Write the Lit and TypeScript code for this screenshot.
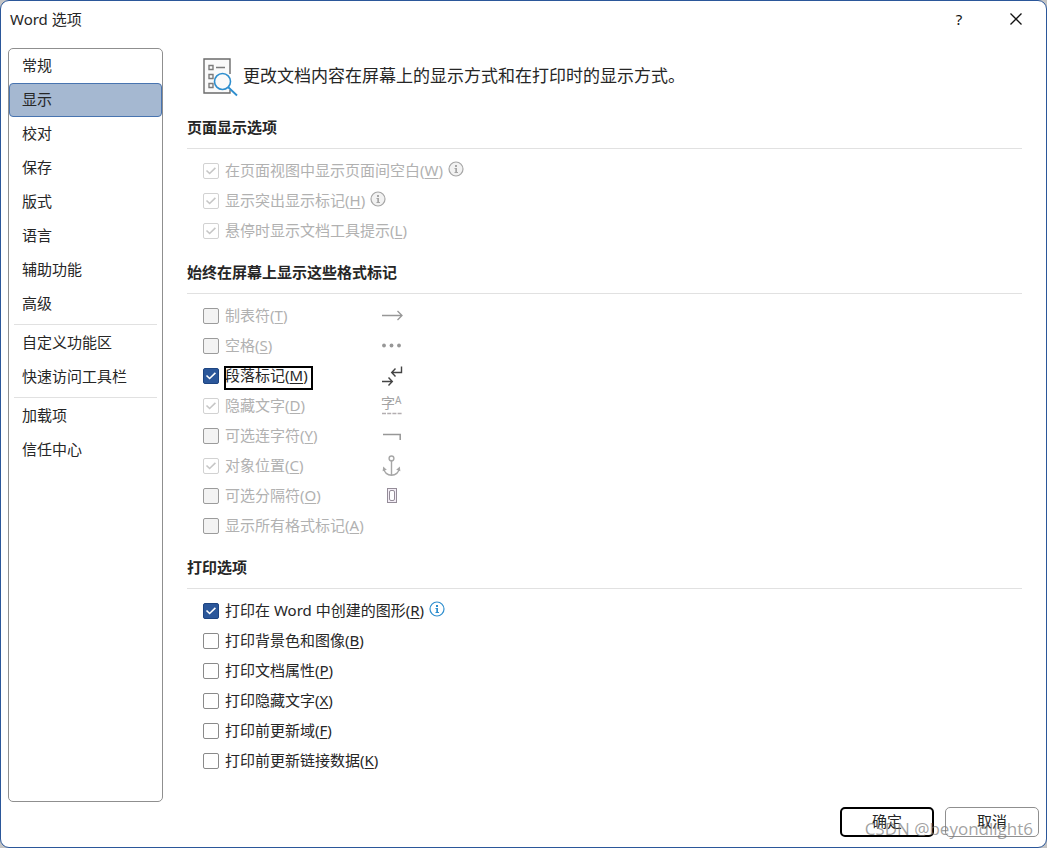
import { LitElement, html, svg, css, nothing } from "lit";
import { customElement, property, state } from "lit/decorators.js";

type Option = {
  id: string;
  text: string;
  key: string;
  checked?: boolean;
  disabled?: boolean;
  focused?: boolean;
  info?: boolean;
  mark?: string;
};

const pageOptions: Option[] = [
  { id: "whitespace", text: "在页面视图中显示页面间空白", key: "W", checked: true, disabled: true, info: true },
  { id: "highlight", text: "显示突出显示标记", key: "H", checked: true, disabled: true, info: true },
  { id: "tooltips", text: "悬停时显示文档工具提示", key: "L", checked: true, disabled: true },
];

const markOptions: Option[] = [
  { id: "tabs", text: "制表符", key: "T", disabled: true, mark: "tab" },
  { id: "spaces", text: "空格", key: "S", disabled: true, mark: "space" },
  { id: "paragraph", text: "段落标记", key: "M", checked: true, focused: true, mark: "paragraph" },
  { id: "hidden", text: "隐藏文字", key: "D", checked: true, disabled: true, mark: "hidden" },
  { id: "hyphens", text: "可选连字符", key: "Y", disabled: true, mark: "hyphen" },
  { id: "anchors", text: "对象位置", key: "C", checked: true, disabled: true, mark: "anchor" },
  { id: "breaks", text: "可选分隔符", key: "O", disabled: true, mark: "break" },
  { id: "all", text: "显示所有格式标记", key: "A", disabled: true },
];

const printOptions: Option[] = [
  { id: "drawings", text: "打印在 Word 中创建的图形", key: "R", checked: true, info: true },
  { id: "background", text: "打印背景色和图像", key: "B" },
  { id: "properties", text: "打印文档属性", key: "P" },
  { id: "print-hidden", text: "打印隐藏文字", key: "X" },
  { id: "fields", text: "打印前更新域", key: "F" },
  { id: "links", text: "打印前更新链接数据", key: "K" },
];

const navGroups = [
  ["常规", "显示", "校对", "保存", "版式", "语言", "辅助功能", "高级"],
  ["自定义功能区", "快速访问工具栏"],
  ["加载项", "信任中心"],
];

const marks: Record<string, unknown> = {
  tab: svg`<path d="M0 11.5H20M15.5 7L20 11.5L15.5 16" stroke="#979797" stroke-width="1.3"/>`,
  space: svg`<g fill="#979797"><circle cx="2" cy="11.5" r="1.9"/><circle cx="9.5" cy="11.5" r="1.9"/><circle cx="17" cy="11.5" r="1.9"/></g>`,
  paragraph: svg`<path d="M19.5 2.5V8.5H10M13.5 4.5L9.7 8.5L13.5 12.5M0 17.5H10M6.5 13.5L10.3 17.5L6.5 21.5" stroke="#444" stroke-width="1.4"/>`,
  hidden: svg`<text x="-1" y="14" font-size="14" fill="#a3a3a3">字</text><text x="13" y="10" font-size="10" fill="#a3a3a3">A</text><path d="M0 19.5H20" stroke="#b3aeb1" stroke-width="1.4" stroke-dasharray="4 1.2"/>`,
  hyphen: svg`<path d="M1 10.5H18.2V16" stroke="#979797" stroke-width="1.5"/>`,
  anchor: svg`<g stroke="#a6a6a6" stroke-width="1.4"><circle cx="9.5" cy="4.4" r="2.4"/><path d="M9.5 6.8V21.4M1.8 14.5C2 18.5 5.5 21.3 9.5 21.3C13.5 21.3 17 18.5 17.2 14.5"/></g><path d="M1.2 12.5L4.8 15.8L.6 17.2zM17.8 12.5L14.2 15.8L18.4 17.2z" fill="#a6a6a6"/>`,
  break: svg`<g stroke="#948c98"><rect x="5.5" y="4.5" width="9" height="14" fill="#f3edf6"/><rect x="7.5" y="6.5" width="5" height="10" rx="1.5" fill="#fff"/></g>`,
};

@customElement("option-row")
class OptionRow extends LitElement {
  @property({ attribute: false }) option!: Option;

  static styles = css`
    :host {
      display: grid;
      grid-template-columns: minmax(179px, max-content) auto;
      align-items: center;
      justify-content: start;
      height: 30px;
      color: #262626;
    }
    .main, .field {
      display: flex;
      align-items: center;
      gap: 6px;
    }
    .main { gap: 5px; }
    .box {
      display: grid;
      flex: none;
    }
    .box > * { grid-area: 1 / 1; }
    input {
      appearance: none;
      width: 16px;
      height: 16px;
      margin: 0;
      border: 1px solid #8a8a8a;
      border-radius: 2px;
      background: #fff;
    }
    input:checked { background: #2b579a; border-color: #1d4481; }
    input:disabled { background: #f3f3f3; border-color: #9b9b9b; }
    input:checked:disabled { background: #fff; border-color: #d2d2d2; }
    .tick { fill: none; stroke: #fff; stroke-width: 1.6; pointer-events: none; }
    .off .tick { stroke: #c6c6c6; }
    .off { color: #b1b1b1; }
    label {
      line-height: 18px;
      padding-bottom: 2px;
      white-space: nowrap;
    }
    .focused {
      outline: 2px solid #000;
      outline-offset: -2px;
      padding: 0 5px 6px 1px;
      margin: 0 0 -4px -1px;
    }
    u { text-underline-offset: 2px; text-decoration-thickness: 1px; }
    .info { margin-bottom: 4px; flex: none; }
    .mark { fill: none; overflow: visible; margin-bottom: 2px; }
  `;

  render() {
    const o = this.option;
    const tone = o.disabled ? "#a6a6a6" : "#2e8ece";
    return html`
      <div class="main ${o.disabled ? "off" : ""}">
        <div class="field">
          <span class="box">
            <input type="checkbox" id=${o.id} ?checked=${o.checked} ?disabled=${o.disabled} />
            ${o.checked
              ? html`<svg class="tick" width="16" height="16"><path d="M3.5 7.5L6.6 10.5L12.4 4.9" /></svg>`
              : nothing}
          </span>
          <label for=${o.id} class=${o.focused ? "focused" : ""}>${o.text}(<u>${o.key}</u>)</label>
        </div>
        ${o.info
          ? html`<svg class="info" width="16" height="16">
              <circle cx="8" cy="8" r="7" fill=${o.disabled ? "#f2f2f2" : "#fff"} stroke=${tone} stroke-width="1.2" />
              <path d="M7 4h2v2H7zM6.5 7H9v4h1v1H6.5v-1H7.3V8H6.5z" fill=${tone} />
            </svg>`
          : nothing}
      </div>
      ${o.mark ? html`<svg class="mark" width="21" height="23">${marks[o.mark]}</svg>` : nothing}
    `;
  }
}

@customElement("app-root")
class AppRoot extends LitElement {
  @state() selected = "显示";

  static styles = css`
    :host {
      display: block;
      background: #c4c4c4;
      font: 15px/20px "Noto Sans", "Noto Sans CJK SC", sans-serif;
      color: #262626;
    }
    .dialog {
      position: relative;
      box-sizing: border-box;
      min-height: 100vh;
      display: flex;
      flex-direction: column;
      border: 1px solid #2b579a;
      border-radius: 9px;
      background: #fff;
    }
    .titlebar {
      display: flex;
      align-items: center;
      justify-content: space-between;
      height: 35px;
      margin-bottom: 12px;
      padding: 0 14px 0 9px;
    }
    h1, h2, p { margin: 0; font-size: 15px; font-weight: 400; }
    .tools { display: flex; gap: 25px; }
    .tool {
      display: grid;
      place-items: center;
      width: 32px;
      height: 32px;
      padding: 0;
      border: 0;
      background: none;
      color: #111;
      font: inherit;
    }
    .close { fill: none; stroke: #111; stroke-width: 1.3; }
    .body {
      flex: 1;
      display: flex;
      gap: 24px;
      padding: 0 24px 0 7px;
    }
    nav {
      box-sizing: border-box;
      flex: none;
      width: 155px;
      border: 1px solid #8f8f8f;
      border-radius: 5px;
    }
    .item {
      display: block;
      box-sizing: border-box;
      width: 100%;
      height: 34px;
      padding: 0 12px 2px;
      border: 1px solid transparent;
      border-radius: 4px;
      background: none;
      color: inherit;
      font: inherit;
      text-align: left;
    }
    .current { background: #a5b8d1; border-color: #4874b0; }
    hr {
      height: 1px;
      margin: 3px 5px 1px;
      border: 0;
      background: #e1e1e1;
    }
    main { flex: 1; min-width: 0; }
    .intro {
      display: flex;
      align-items: center;
      gap: 5px;
      height: 56px;
      margin-bottom: 3px;
      padding-left: 16px;
    }
    .intro svg { overflow: visible; }
    .intro p { font-size: 17px; line-height: 24px; }
    section { margin-bottom: 6px; }
    h2 {
      font-weight: 700;
      line-height: 41px;
      border-bottom: 1px solid #e1e1e1;
    }
    .rows { padding: 7px 0 0 16px; }
    footer {
      display: flex;
      justify-content: flex-end;
      gap: 11px;
      padding: 5px 7px 10px;
    }
    .action {
      width: 94px;
      height: 30px;
      padding: 0 0 2px;
      border: 1px solid #8f8f8f;
      border-radius: 5px;
      background: #fff;
      color: inherit;
      font: inherit;
    }
    .primary { border: 2px solid #000; }
    .watermark {
      position: absolute;
      right: 13px;
      bottom: 7px;
      color: rgba(120, 120, 120, 0.7);
      font-family: "Open Sans", sans-serif;
      font-size: 17px;
      line-height: 22px;
      pointer-events: none;
    }
  `;

  private section(title: string, options: Option[]) {
    return html`<section>
      <h2>${title}</h2>
      <div class="rows">${options.map((o) => html`<option-row .option=${o}></option-row>`)}</div>
    </section>`;
  }

  render() {
    return html`
      <div class="dialog" role="dialog" aria-labelledby="title">
        <div class="titlebar">
          <h1 id="title">Word 选项</h1>
          <div class="tools">
            <button class="tool" type="button">?</button>
            <button class="tool" type="button" aria-label="关闭">
              <svg class="close" width="12" height="12"><path d="M0.5 0.5L11.5 11.5M11.5 0.5L0.5 11.5" /></svg>
            </button>
          </div>
        </div>
        <div class="body">
          <nav>
            ${navGroups.map(
              (group, i) => html`${i ? html`<hr />` : nothing}
              ${group.map(
                (name) => html`<button
                  type="button"
                  class="item ${name === this.selected ? "current" : ""}"
                  @click=${() => (this.selected = name)}
                >${name}</button>`
              )}`
            )}
          </nav>
          <main>
            <div class="intro">
              <svg width="35" height="38" viewBox="0 -1 35 38" fill="none">
                <path d="M27 16V1H1V35H27V32" fill="#fafafa" stroke="#6b6b6b" stroke-width="1.4" />
                <path d="M6 7.5h4v4H6zM6 16.5h4v4H6zM6 25.5h4v4H6zM13 9.5h9" stroke="#7c7c7c" stroke-width="1.4" />
                <path d="M25 29L34 37.5" stroke="#2e8ece" stroke-width="1.8" />
                <circle cx="19.5" cy="23.5" r="8" fill="#fafafa" stroke="#2e8ece" stroke-width="1.6" />
              </svg>
              <p>更改文档内容在屏幕上的显示方式和在打印时的显示方式。</p>
            </div>
            ${this.section("页面显示选项", pageOptions)}
            ${this.section("始终在屏幕上显示这些格式标记", markOptions)}
            ${this.section("打印选项", printOptions)}
          </main>
        </div>
        <footer>
          <button class="action primary" type="button">确定</button>
          <button class="action" type="button">取消</button>
        </footer>
        <div class="watermark">CSDN @beyondlight6</div>
      </div>
    `;
  }
}
